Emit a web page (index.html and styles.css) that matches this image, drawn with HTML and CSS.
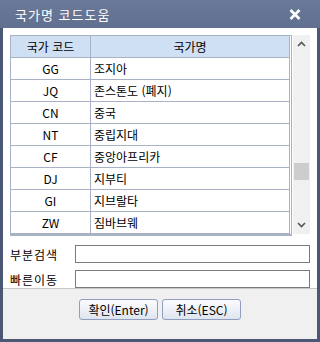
FILE: index.html
```html
<!DOCTYPE html>
<html lang="ko">
<head>
    <meta charset="UTF-8">
    <title>국가명 코드도움</title>
    <link rel="stylesheet" href="styles.css">
</head>
<body>
    <div class="dialog">
        <div class="titlebar">
            <span class="title">국가명 코드도움</span>
            <svg class="close" width="12" height="11" viewBox="0 0 12 11">
                <path d="M1.5 1 L10.5 10 M10.5 1 L1.5 10" stroke="#fff" stroke-width="2.6" fill="none"/>
            </svg>
        </div>

        <div class="content">
            <div class="grid-row">
                <div class="table-box">
                    <table class="codes">
                        <thead>
                            <tr><th class="col-code">국가 코드</th><th>국가명</th></tr>
                        </thead>
                        <tbody>
                            <tr><td class="col-code">GG</td><td>조지아</td></tr>
                            <tr><td class="col-code">JQ</td><td>존스톤도 (폐지)</td></tr>
                            <tr><td class="col-code">CN</td><td>중국</td></tr>
                            <tr><td class="col-code">NT</td><td>중립지대</td></tr>
                            <tr><td class="col-code">CF</td><td>중앙아프리카</td></tr>
                            <tr><td class="col-code">DJ</td><td>지부티</td></tr>
                            <tr><td class="col-code">GI</td><td>지브랄타</td></tr>
                            <tr><td class="col-code">ZW</td><td>짐바브웨</td></tr>
                        </tbody>
                    </table>
                </div>
                <div class="scrollbar">
                    <svg width="9" height="6" viewBox="0 0 9 6">
                        <path d="M1 5 L4.5 1.5 L8 5" stroke="#555" stroke-width="1.6" fill="none"/>
                    </svg>
                    <div class="track">
                        <div class="thumb"></div>
                    </div>
                    <svg width="9" height="6" viewBox="0 0 9 6">
                        <path d="M1 1 L4.5 4.5 L8 1" stroke="#555" stroke-width="1.6" fill="none"/>
                    </svg>
                </div>
            </div>

            <div class="fields">
                <div class="field">
                    <label>부분검색</label>
                    <input type="text">
                </div>
                <div class="field">
                    <label>빠른이동</label>
                    <input type="text">
                </div>
            </div>
        </div>

        <div class="footer">
            <button class="btn">확인(Enter)</button>
            <button class="btn">취소(ESC)</button>
        </div>
    </div>
</body>
</html>
```

FILE: styles.css
```css
body {
    margin: 0;
    font-family: "Noto Sans CJK KR", "DejaVu Sans", sans-serif;
    font-size: 12px;
    color: #000;
}

.dialog {
    width: 320px;
    height: 342px;
    background-color: #4b5875;
    display: flex;
    flex-direction: column;
    box-sizing: border-box;
    padding-bottom: 4px;
}

.titlebar {
    height: 28px;
    flex: none;
    display: flex;
    align-items: center;
    justify-content: space-between;
    padding: 0 19px 0 15px;
    background: linear-gradient(#6b7999, #616f90);
}
.title {
    color: #fff;
    font-size: 13px;
    letter-spacing: 1px;
}

.content {
    flex: 1;
    margin: 0 3px;
    background-color: #fff;
    padding: 7px 7px 0 7px;
}

.grid-row {
    display: flex;
    gap: 1px;
}

.table-box {
    flex: 1;
    border: 1px solid #a9b2c5;
    border-right: 3px double #a9b2c5;
    border-bottom: 3px solid #a9b2c5;
}

.codes {
    width: 100%;
    border-collapse: collapse;
}
.codes th,
.codes td {
    height: 21px;
    padding: 0 0 0 3px;
    border-bottom: 1px solid #a9b2c5;
    font-weight: normal;
    text-align: left;
    white-space: nowrap;
    line-height: 21px;
}
.codes tr:last-child td {
    border-bottom: none;
}
.codes th {
    background-color: #cfdff4;
    text-align: center;
    padding: 0;
}
.codes .col-code {
    width: 79px;
    padding: 0;
    text-align: center;
    border-right: 1px solid #a9b2c5;
}

.scrollbar {
    width: 17px;
    height: 199px;
    background-color: #f0f0f0;
    display: flex;
    flex-direction: column;
    align-items: center;
    padding: 6px 0;
    box-sizing: border-box;
}
.track {
    flex: 1;
    width: 100%;
    padding-top: 116px;
}
.thumb {
    height: 17px;
    margin: 0 1px;
    background-color: #cdcdcd;
}

.fields {
    display: flex;
    flex-direction: column;
    gap: 7px;
    margin-top: 9px;
}
.field {
    display: flex;
    align-items: center;
}
.field label {
    width: 65px;
    letter-spacing: 1px;
}
.field input {
    flex: 1;
    height: 18px;
    box-sizing: border-box;
    border: 1px solid #7a7a7a;
    margin: 0;
    padding: 0 3px;
}

.footer {
    flex: none;
    height: 40px;
    margin: 0 3px;
    background-color: #f0f0f0;
    border-top: 1px solid #c8c8c8;
    display: flex;
    justify-content: center;
    align-items: flex-start;
    gap: 4px;
    padding-top: 10px;
    box-sizing: content-box;
}

.btn {
    width: 79px;
    height: 21px;
    padding: 0;
    font-family: "Noto Sans CJK KR", "DejaVu Sans", sans-serif;
    font-size: 12px;
    color: #000;
    border: 1px solid #8f9fbd;
    border-radius: 3px;
    background: linear-gradient(#fbfcfe, #dfe5ef);
}
```
